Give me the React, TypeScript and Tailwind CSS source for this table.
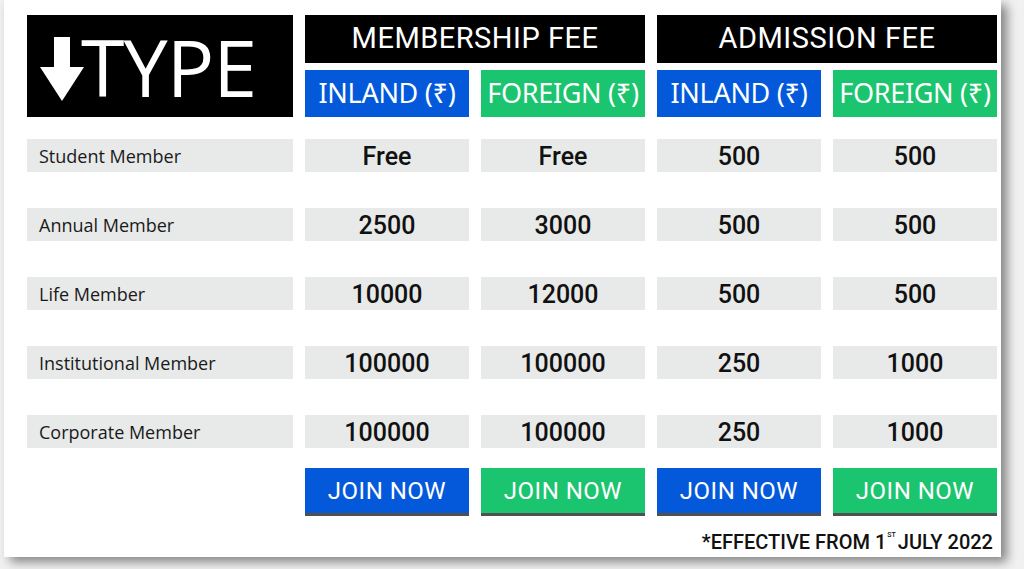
import React from "react";

const rows = [
  { type: "Student Member", values: ["Free", "Free", "500", "500"] },
  { type: "Annual Member", values: ["2500", "3000", "500", "500"] },
  { type: "Life Member", values: ["10000", "12000", "500", "500"] },
  { type: "Institutional Member", values: ["100000", "100000", "250", "1000"] },
  { type: "Corporate Member", values: ["100000", "100000", "250", "1000"] },
];

const subHeads = [
  { label: "INLAND (₹)", color: "bg-[#0459db]" },
  { label: "FOREIGN (₹)", color: "bg-[#1bc46e]" },
  { label: "INLAND (₹)", color: "bg-[#0459db]" },
  { label: "FOREIGN (₹)", color: "bg-[#1bc46e]" },
];

const cols = "grid grid-cols-[266px_164px_164px_164px_164px] gap-x-[12px]";

export default function App() {
  return (
    <div className="w-[1024px] h-[569px] bg-[#f1f1f1] pl-[4px] overflow-hidden">
      <div className="w-[997px] h-[557px] bg-white shadow-[6px_5px_10px_rgba(0,0,0,0.45)] pl-[23px] pt-[15px] flex flex-col">
        {/* Header block */}
        <div className={`${cols} grid-rows-[48px_47px] gap-y-[7px]`}>
          <div className="row-span-2 bg-black flex items-center pl-[13px] text-white">
            <svg width="44" height="64" viewBox="0 0 44 64" className="mt-[6px]">
              <polygon points="14,0 30,0 30,30 44,30 22,64 0,30 14,30" fill="white" />
            </svg>
            <span className="ml-[-3px] text-[79px] leading-none tracking-[-1px] font-['Open_Sans',sans-serif]">
              TYPE
            </span>
          </div>
          <div className="col-span-2 bg-black text-white flex items-center justify-center text-[29px] tracking-[0.5px] font-['Roboto',sans-serif]">
            MEMBERSHIP FEE
          </div>
          <div className="col-span-2 bg-black text-white flex items-center justify-center text-[29px] tracking-[0.5px] font-['Roboto',sans-serif]">
            ADMISSION FEE
          </div>
          {subHeads.map((s, i) => (
            <div
              key={i}
              className={`${s.color} text-white flex items-center justify-center text-[27px] whitespace-nowrap tracking-[-0.3px] font-['Noto_Sans',sans-serif]`}
            >
              {s.label}
            </div>
          ))}
        </div>

        {/* Body rows */}
        <div className="mt-[22px] flex flex-col gap-y-[36px]">
          {rows.map((r) => (
            <div key={r.type} className={`${cols} grid-rows-[33px] h-[33px] leading-none`}>
              <div className="bg-[#e8e9e9] flex items-center pl-[12px] text-[18px] text-[#1a1a1a] font-['Open_Sans',sans-serif]">
                {r.type}
              </div>
              {r.values.map((v, i) => (
                <div
                  key={i}
                  className="bg-[#e8e9e9] flex items-center justify-center pt-[2px] text-[25px] font-medium text-[#111] font-['Roboto',sans-serif]"
                >
                  {v}
                </div>
              ))}
            </div>
          ))}
        </div>

        {/* Join buttons */}
        <div className={`${cols} mt-[20px]`}>
          <div />
          {subHeads.map((s, i) => (
            <button
              key={i}
              className={`${s.color} h-[48px] border-b-[3px] border-[#505050] text-white text-[24px] tracking-[0.5px] font-['Roboto',sans-serif]`}
            >
              JOIN NOW
            </button>
          ))}
        </div>

        {/* Footer note */}
        <div className="mt-[16px] w-[966px] flex justify-end text-[20px] leading-none font-medium text-[#111] font-['Roboto',sans-serif]">
          <span>
            *EFFECTIVE FROM 1
            <span className="text-[7px] align-top ml-[1px] mr-[2px]">ST</span>
            JULY 2022
          </span>
        </div>
      </div>
    </div>
  );
}
